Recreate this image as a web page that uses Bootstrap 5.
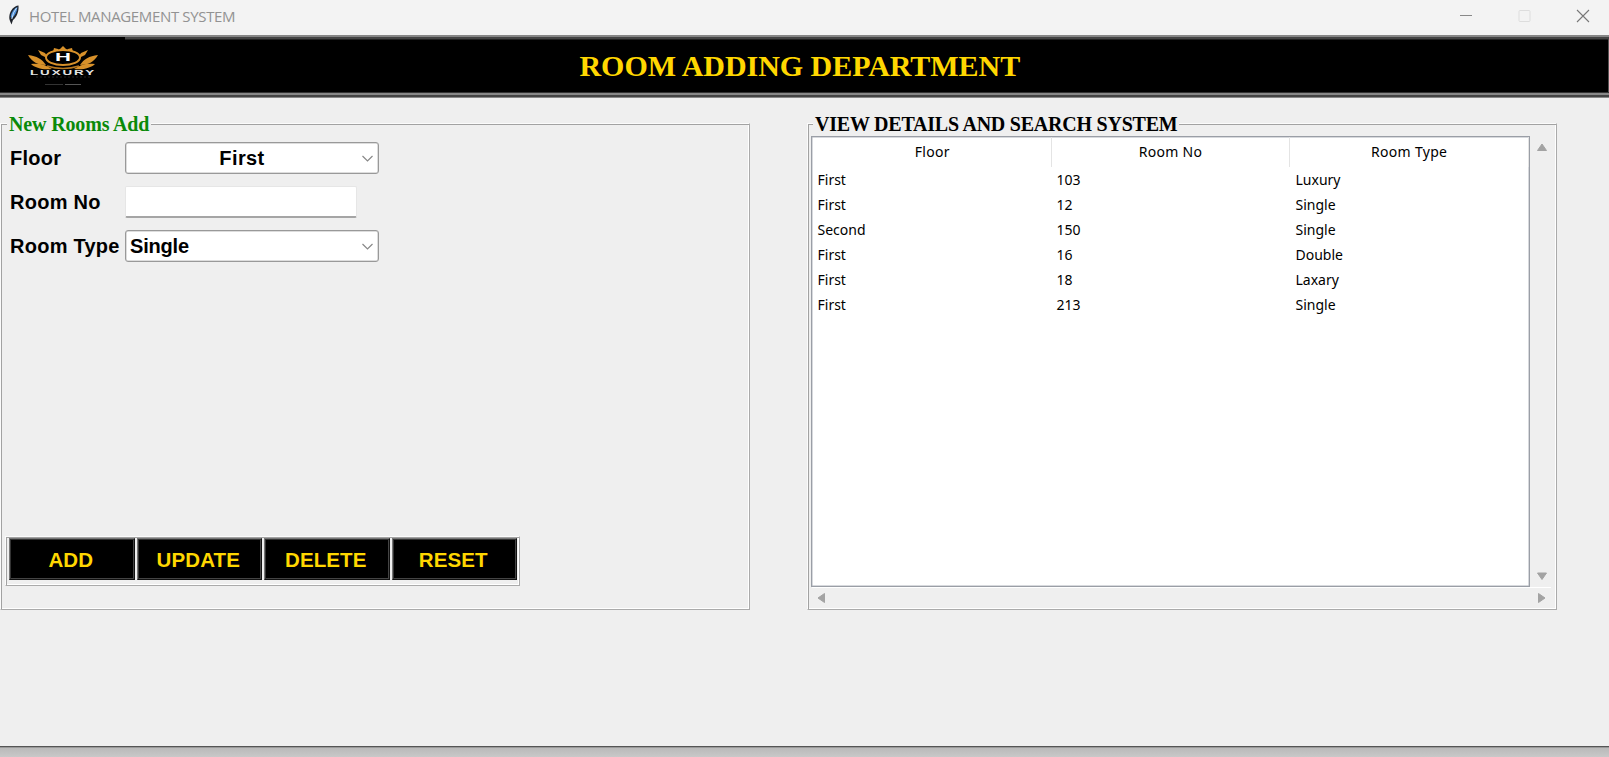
<!DOCTYPE html>
<html lang="en">
<head>
<meta charset="utf-8">
<title>HOTEL MANAGEMENT SYSTEM</title>
<link href="https://cdn.jsdelivr.net/npm/bootstrap@5.3.0/dist/css/bootstrap.min.css" rel="stylesheet">
<style>
body{width:1609px;height:757px;overflow:hidden;background:linear-gradient(#b8b8b8,#c8c8c8) 0 747px/100% 10px no-repeat #c8c8c8;color:#000;font-family:"Noto Sans","Open Sans",sans-serif;font-size:14px;line-height:25px}
.win{height:748px;background:#efefef;border-bottom:1px solid #999;box-shadow:inset 0 -1px #555}
.titlebar{height:35px;background:#f3f3f3;padding-left:7px;color:#929292}
.titlebar .caption{margin-left:9px;font:15px/32px "Open Sans",sans-serif;letter-spacing:-.35px}
.controls{margin-right:-.5px}
.ctl{width:58.5px;height:32px}
.hero{height:63px;background:#000;border-top:2px solid #868686;box-shadow:inset 0 2.6px #444,inset 0 -1px #888,inset 0 -3px #444,inset 0 -5px #888,inset 0 -6px #333,inset -1px 0 #555}
.hero .logo{width:125px;height:54px;background:#000}
.hero h1{font:bold 30px/58px "Liberation Serif",serif;letter-spacing:-.05px;color:#ffd700;margin:0 0 0 454.5px;height:60px}
.workspace{padding-top:25px;gap:57px}
.ridge{border:1px solid;border-color:#fbfbfb #aaa #aaa #fbfbfb;box-shadow:inset 1px 1px #a2a2a2,inset -1px -1px #fff}
.panel{width:750px;height:487px}
.legend{display:block;width:max-content;height:24px;margin:-13px 0 0 6px;padding:0 2px;background:#efefef;font:bold 20px/26px "Liberation Serif",serif;letter-spacing:-.15px}
.legend.green{color:#0a8a0a}
.legend.wide{margin-left:5px;letter-spacing:-.23px}
.arial{font:bold 20px/32px "Liberation Sans",sans-serif}
label.arial{letter-spacing:.25px}
.form-rows{grid-template-columns:115px 254px;row-gap:12px;margin:7px 0 0 9px}
.combo{height:32px;border:1px solid #999;border-radius:3px;background:#fff;box-shadow:inset 0 0 0 .5px #bbb}
.combo .arial{line-height:30px}
.combo .centered{width:232px;margin-right:3px;letter-spacing:.4px}
.combo .start{width:231px;margin-left:4px;letter-spacing:-.2px}
.entry{width:232px;height:32px;background:#fff;border:1px solid #e6e6e6;border-bottom:2px solid #a5a5a5;border-radius:2px}
.buttons{width:515px;height:50px;padding:1px 0 0 3px;gap:2px;margin:274px 0 0 4px}
.key{width:125.5px;height:42px;background:#000;color:#ffd700;border:1px solid #777;border-right-color:#111;border-bottom-color:#111;border-radius:0;padding:0 2px 0 0;box-shadow:inset 1px 1px #333,inset -1px -1px #444;font-size:20.5px;line-height:39px;letter-spacing:.1px}
.view{margin:1px 0 0 3px}
.tree{width:719px;height:451px;background:#fff;border:1px solid #9a9ea6;box-shadow:inset 0 0 0 .5px #b0b4bc}
.tree .heads{height:30px}
.tree .heads>div{width:239px;text-align:center;border-right:1px solid #e4e4e4;line-height:30px;letter-spacing:.3px}
.tree .heads>div:first-child{width:240px;padding-left:2px}
.cells>div{width:239px;padding-left:5.5px;height:25px;white-space:nowrap}
.hbar{margin-left:3px}
</style>
</head>
<body>
<div class="win">
  <header class="titlebar d-flex">
    <svg width="13" height="22" viewBox="0 0 13 22" class="mt-1"><path d="M11.500 1.500C7 2 3.500 6 2.500 11c-.4 2.500-.3 4 .5 6l1.500 3.500L6 16c3.500-2.500 6-8 5.500-14.500z" fill="#20242c"/><path d="M10.500 2.700C7 4.500 4.300 8 3.600 13L5 14c3-2.500 5-6 5.500-11.300z" fill="#4d8fd8"/><path d="M9.500 4Q6 8 4.800 15" stroke="#c8e0f8" fill="none"/></svg>
    <span class="caption">HOTEL MANAGEMENT SYSTEM</span>
    <div class="controls d-flex ms-auto">
      <svg class="ctl" viewBox="0 0 58.500 32"><path d="M26 15.500h12" stroke="#888"/></svg>
      <svg class="ctl" viewBox="0 0 58.500 32"><rect x="26" y="10.500" width="11" height="11" rx="1" fill="none" stroke="#ddd"/></svg>
      <svg class="ctl" viewBox="0 0 58.500 32"><path d="M26 10l12 12M38 10L26 22" stroke="#777" stroke-width="1.100"/></svg>
    </div>
  </header>
  <div class="hero d-flex">
    <svg class="logo" viewBox="0 37 125 54">
      <g fill="#d8912a">
        <path d="M63 46l4 4-4 2-4-2zM54 48l4 1 1 2-6 1zM72 48l-4 1-1 2 6 1z"/>
        <path d="M38 50l7 3 4 6-8-4zM88 50l-7 3-4 6 8-4z"/>
        <path d="M28 55c9 1 14 4 18 10-8 0-14-3-18-10zM98 55c-9 1-14 4-18 10 8 0 14-3 18-10z"/>
        <path d="M31 64c8-1 14 0 21 5-9 1-17-1-21-5zM95 64c-8-1-14 0-21 5 9 1 17-1 21-5z"/>
      </g>
      <ellipse cx="63" cy="57.500" rx="17" ry="7.500" fill="#000" stroke="#d8912a" stroke-width="2"/>
      <path d="M47 66q16 5 32 0" fill="none" stroke="#b87820" stroke-width="1.500"/>
      <text x="55" y="61" textLength="16" lengthAdjust="spacingAndGlyphs" font-family="Liberation Sans" font-weight="bold" font-size="10" fill="#fff">H</text>
      <text x="30" y="75" textLength="66" lengthAdjust="spacingAndGlyphs" font-family="Liberation Sans" font-weight="bold" font-size="7" letter-spacing="1" fill="#e4e4e4">LUXURY</text>
      <path d="M36 77h54" stroke="#222" stroke-dasharray="2 2"/><path d="M45 84.500h18" stroke="#333"/><path d="M65 84.500h16" stroke="#555"/>
    </svg>
    <h1>ROOM ADDING DEPARTMENT</h1>
  </div>
  <main class="workspace d-flex">
    <section class="panel ridge">
      <span class="legend green">New Rooms Add</span>
      <div class="form-rows d-grid">
        <label class="arial">Floor</label>
        <div class="combo d-flex"><span class="arial centered text-center">First</span><svg width="14" height="30" viewBox="0 0 14 30"><path d="M1.500 13l5 5 5-5" fill="none" stroke="#888" stroke-width="1.200"/></svg></div>
        <label class="arial">Room No</label>
        <div class="entry"></div>
        <label class="arial">Room Type</label>
        <div class="combo d-flex"><span class="arial start">Single</span><svg width="14" height="30" viewBox="0 0 14 30"><path d="M1.500 13l5 5 5-5" fill="none" stroke="#888" stroke-width="1.200"/></svg></div>
      </div>
      <div class="buttons ridge d-flex">
        <button class="btn arial key">ADD</button>
        <button class="btn arial key">UPDATE</button>
        <button class="btn arial key">DELETE</button>
        <button class="btn arial key">RESET</button>
      </div>
    </section>
    <section class="panel ridge">
      <span class="legend wide">VIEW DETAILS AND SEARCH SYSTEM</span>
      <div class="view d-flex">
        <div class="tree">
          <div class="heads d-flex"><div>Floor</div><div>Room No</div><div>Room Type</div></div>
          <div class="cells d-flex"><div>First</div><div>103</div><div>Luxury</div></div>
          <div class="cells d-flex"><div>First</div><div>12</div><div>Single</div></div>
          <div class="cells d-flex"><div>Second</div><div>150</div><div>Single</div></div>
          <div class="cells d-flex"><div>First</div><div>16</div><div>Double</div></div>
          <div class="cells d-flex"><div>First</div><div>18</div><div>Laxary</div></div>
          <div class="cells d-flex"><div>First</div><div>213</div><div>Single</div></div>
        </div>
        <svg width="22" height="451" viewBox="0 0 22 451"><g fill="#a3a3a3" stroke="#a3a3a3" stroke-linejoin="round"><path d="M7.500 14.500l4.500-6.500 4.500 6.500z"/><path d="M7.500 437l4.500 6.500 4.500-6.500z"/></g></svg>
      </div>
      <svg class="hbar d-block" width="744" height="22" viewBox="0 0 744 22"><path d="M1 .5h739" stroke="#fff"/><g fill="#a3a3a3" stroke="#a3a3a3" stroke-linejoin="round"><path d="M13.500 6.500l-6.500 4.500 6.500 4.500z"/><path d="M727.500 6.500l6.500 4.500-6.500 4.500z"/></g></svg>
    </section>
  </main>
</div>
<script src="https://cdn.jsdelivr.net/npm/bootstrap@5.3.0/dist/js/bootstrap.bundle.min.js"></script>
</body>
</html>
